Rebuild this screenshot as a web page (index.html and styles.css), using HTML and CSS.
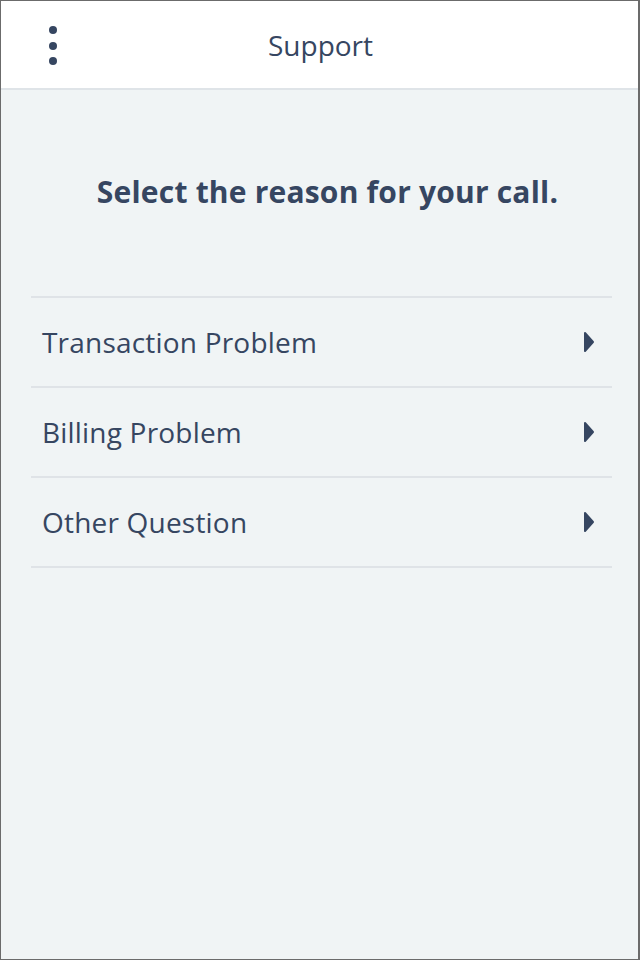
FILE: index.html
```html
<!DOCTYPE html>
<html>
<head>
<meta charset="utf-8">
<link rel="stylesheet" href="styles.css">
</head>
<body>
<div class="frame">
  <header class="topbar">
    <button class="menu" aria-label="Menu">
      <span class="dot"></span><span class="dot"></span><span class="dot"></span>
    </button>
    <h1 class="title">Support</h1>
  </header>
  <main class="content">
    <h2 class="prompt">Select the reason for your call.</h2>
    <ul class="reasons">
      <li class="reason"><span class="label">Transaction Problem</span><svg class="caret" viewBox="0 0 12 22"><polygon points="2,2 10,11 2,20"/></svg></li>
      <li class="reason"><span class="label">Billing Problem</span><svg class="caret" viewBox="0 0 12 22"><polygon points="2,2 10,11 2,20"/></svg></li>
      <li class="reason"><span class="label">Other Question</span><svg class="caret" viewBox="0 0 12 22"><polygon points="2,2 10,11 2,20"/></svg></li>
    </ul>
  </main>
</div>
</body>
</html>
```
FILE: styles.css
```css
* { box-sizing: border-box; }
html, body { margin: 0; padding: 0; }
body {
  width: 640px;
  height: 960px;
  font-family: "Open Sans", Lato, sans-serif;
  color: #364661;
}
.frame {
  width: 640px;
  height: 960px;
  border: 1px solid #6b6b6b;
  border-right-width: 2px;
  background: #f0f4f5;
  display: flex;
  flex-direction: column;
}
.topbar {
  height: 89px;
  flex: none;
  background: #ffffff;
  border-bottom: 2px solid #dfe4e8;
  position: relative;
  display: flex;
  align-items: center;
  justify-content: center;
}
.menu {
  position: absolute;
  left: 47px;
  top: 25px;
  width: 10px;
  height: 39px;
  padding: 0;
  border: 0;
  background: none;
  display: flex;
  flex-direction: column;
  align-items: center;
  justify-content: space-between;
}
.dot {
  width: 8px;
  height: 8px;
  border-radius: 50%;
  background: #364661;
}
.title {
  margin: 0;
  font-size: 28px;
  font-weight: 400;
  line-height: 36px;
  padding-left: 2px;
}
.content {
  flex: 1;
  padding: 0 26px 0 30px;
}
.prompt {
  margin: 84px 0 0;
  text-align: center;
  font-size: 30px;
  font-weight: 700;
  padding-left: 12px;
  line-height: 36px;
  letter-spacing: 0.2px;
}
.reasons {
  list-style: none;
  margin: 86px 0 0;
  padding: 0;
  border-top: 2px solid #dfe3e7;
}
.reason {
  height: 90px;
  border-bottom: 2px solid #dfe3e7;
  display: flex;
  align-items: center;
  justify-content: space-between;
  padding: 0 17px 0 11px;
}
.label {
  font-size: 28px;
  font-weight: 400;
  letter-spacing: 0.2px;
}
.caret {
  width: 12px;
  height: 22px;
  fill: #364661;
  stroke: #364661;
  stroke-width: 2;
  stroke-linejoin: round;
}
```
